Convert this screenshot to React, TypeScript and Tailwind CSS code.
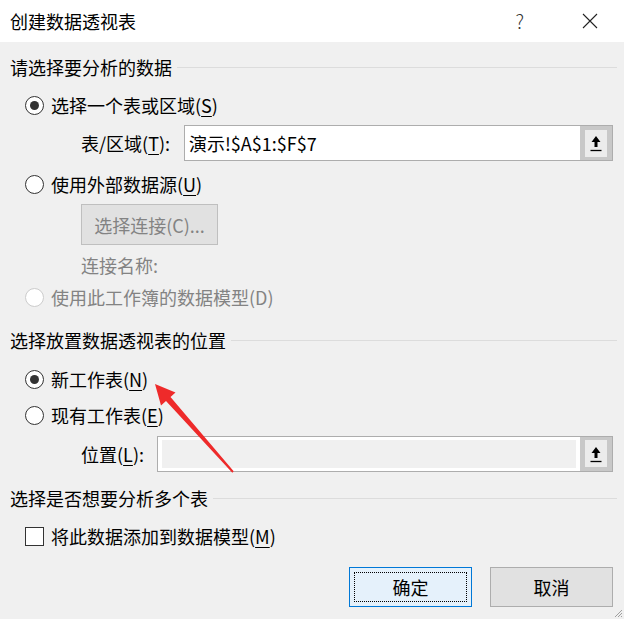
import React from 'react';

const FONT = { fontFamily: '"Noto Sans CJK SC", "Noto Sans", sans-serif' };

const Radio: React.FC<{ checked?: boolean; disabled?: boolean }> = ({ checked, disabled }) => (
  <span
    className={`flex h-[19px] w-[19px] shrink-0 items-center justify-center rounded-full border bg-white ${
      disabled ? 'border-[#cccccc]' : 'border-[#333333]'
    }`}
  >
    {checked && <span className="h-[9px] w-[9px] rounded-full bg-[#333333]" />}
  </span>
);

const Key: React.FC<{ k: string }> = ({ k }) => (
  <span className="underline decoration-1 underline-offset-[3px]">{k}</span>
);

const Section: React.FC<{ title: string; className: string }> = ({ title, className }) => (
  <div className={`flex items-center pl-[10px] pr-[7px] ${className}`}>
    <span className="text-[18px] leading-[24px] text-black">{title}</span>
    <span className="ml-[5px] h-px flex-1 bg-[#dcdcdc]" />
  </div>
);

const UpArrow: React.FC = () => (
  <span className="flex h-full w-[32px] shrink-0 items-center justify-center bg-[#c8c8c8]">
    <span className="flex h-[27px] w-[22px] items-center justify-center bg-[#ececec]">
      <svg width="14" height="20" viewBox="0 0 14 20">
        <polygon points="7,3 11.5,9 8.5,9 8.5,14 5.5,14 5.5,9 2.5,9" fill="#000" />
        <line x1="1.5" y1="17.5" x2="12.5" y2="17.5" stroke="#000" strokeWidth="1.3" />
      </svg>
    </span>
  </span>
);

export default function App() {
  return (
    <div className="relative h-[619px] w-[624px] overflow-hidden bg-[#f0f0f0] text-black" style={FONT}>
      {/* title bar */}
      <div className="flex h-[42px] items-center bg-white pl-[10px]">
        <span className="text-[18px] leading-[24px]">创建数据透视表</span>
        <span className="ml-auto mr-[58px] text-[19px] font-light leading-[24px] text-[#333]">?</span>
        <svg width="16" height="16" viewBox="0 0 16 16" className="mr-[26px]">
          <path d="M1 1 L15 15 M15 1 L1 15" stroke="#222" strokeWidth="1.1" />
        </svg>
      </div>

      <Section title="请选择要分析的数据" className="h-[50px]" />

      <div className="flex h-[26px] items-center gap-[7px] pl-[25px]">
        <Radio checked />
        <span className="text-[18px] leading-[24px]">
          选择一个表或区域(<Key k="S" />)
        </span>
      </div>

      <div className="flex h-[50px] items-center pl-[81px] pr-[11px]">
        <span className="w-[103px] text-[18px] leading-[24px]">
          表/区域(<Key k="T" />):
        </span>
        <div className="flex h-[36px] flex-1 items-center border border-[#adadad] bg-white">
          <span className="flex-1 pl-[4px] text-[18px] leading-[24px]">演示!$A$1:$F$7</span>
          <UpArrow />
        </div>
      </div>

      <div className="flex h-[32px] items-center gap-[7px] pl-[25px]">
        <Radio />
        <span className="text-[18px] leading-[24px]">
          使用外部数据源(<Key k="U" />)
        </span>
      </div>

      <div className="h-[49px] pl-[81px] pt-[4px]">
        <div className="flex h-[41px] w-[137px] items-center justify-center border border-[#bfbfbf] bg-[#e1e1e1] text-[18px] leading-[24px] text-[#838383]">
          选择连接(C)...
        </div>
      </div>

      <div className="flex h-[32px] items-center pl-[81px] text-[18px] leading-[24px] text-[#838383]">
        连接名称:
      </div>

      <div className="flex h-[32px] items-center gap-[7px] pl-[25px]">
        <Radio disabled />
        <span className="text-[18px] leading-[24px] text-[#838383]">使用此工作簿的数据模型(D)</span>
      </div>

      <Section title="选择放置数据透视表的位置" className="h-[48px] pt-[6px]" />

      <div className="flex h-[36px] items-center gap-[7px] pl-[25px]">
        <Radio checked />
        <span className="text-[18px] leading-[24px]">
          新工作表(<Key k="N" />)
        </span>
      </div>

      <div className="flex h-[36px] items-center gap-[7px] pl-[25px]">
        <Radio />
        <span className="text-[18px] leading-[24px]">
          现有工作表(<Key k="E" />)
        </span>
      </div>

      <div className="flex h-[41px] items-center pl-[81px] pr-[11px]">
        <span className="w-[76px] text-[18px] leading-[24px]">
          位置(<Key k="L" />):
        </span>
        <div className="flex h-[36px] flex-1 items-center border border-[#adadad] bg-white">
          <span className="mx-[4px] my-[3px] h-[28px] flex-1 bg-[#f0f0f0]" />
          <UpArrow />
        </div>
      </div>

      <Section title="选择是否想要分析多个表" className="h-[48px]" />

      <div className="flex h-[28px] items-center gap-[7px] pl-[25px]">
        <span className="h-[19px] w-[19px] border border-[#333333] bg-white" />
        <span className="text-[18px] leading-[24px]">
          将此数据添加到数据模型(<Key k="M" />)
        </span>
      </div>

      <div className="flex justify-end gap-[18px] pr-[11px] pt-[17px]">
        <div className="flex h-[40px] w-[123px] items-center justify-center border border-[#0078d7] bg-[#e5f1fb] p-[4px]">
          <span className="flex h-full w-full items-center justify-center border border-dotted border-black text-[18px] leading-[24px]">
            确定
          </span>
        </div>
        <div className="flex h-[40px] w-[123px] items-center justify-center border border-[#adadad] bg-[#e1e1e1] text-[18px] leading-[24px]">
          取消
        </div>
      </div>

      {/* resize grip */}
      <svg width="10" height="10" viewBox="0 0 10 10" className="absolute bottom-[1px] right-[1px]">
        <path d="M9 2 L2 9 M9 5 L5 9 M9 8 L8 9" stroke="#a0a0a0" strokeWidth="1" />
      </svg>

      {/* red annotation arrow */}
      <svg width="624" height="619" className="pointer-events-none absolute left-0 top-0">
        <polygon
          points="155,384 175.5,392.5 170.5,397 233.7,471.3 232.3,472.7 166,401 161,405.5"
          fill="#ee2a2a"
        />
      </svg>
    </div>
  );
}
